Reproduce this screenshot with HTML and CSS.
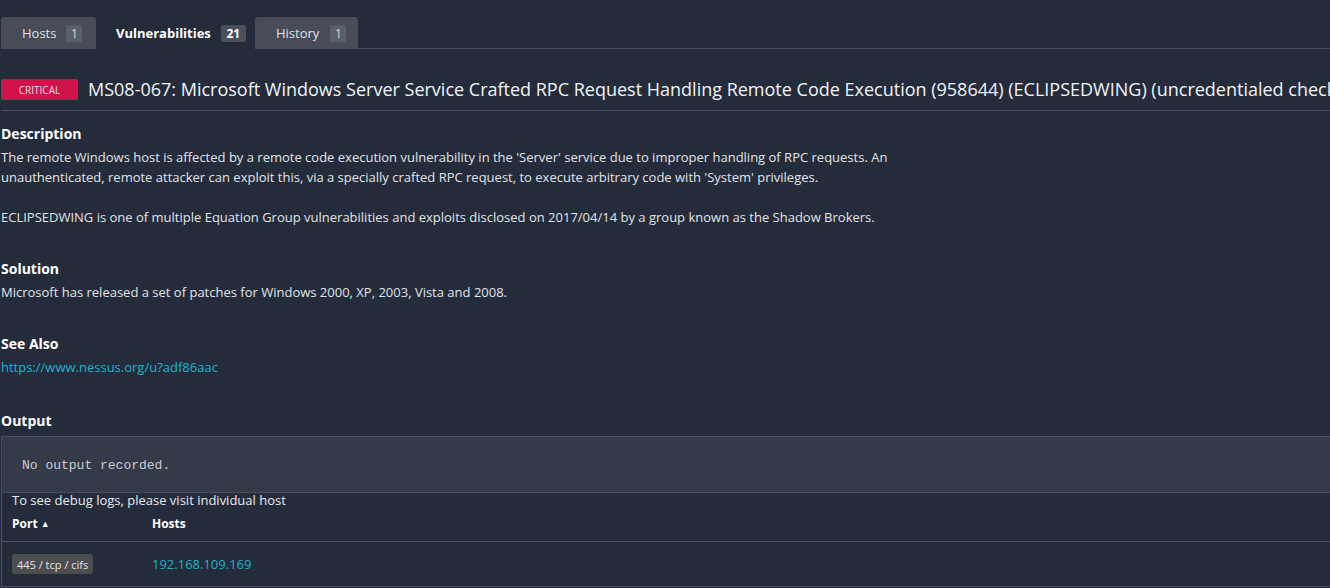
FILE: index.html
```html
<!DOCTYPE html>
<html>
<head>
<meta charset="utf-8">
<link rel="stylesheet" href="styles.css">
</head>
<body>
<div class="page">
  <div class="tabs">
    <div class="tab tab-hosts"><span>Hosts</span><span class="count">1</span></div>
    <div class="tab tab-vulns active"><span>Vulnerabilities</span><span class="count">21</span></div>
    <div class="tab tab-history"><span>History</span><span class="count">1</span></div>
    <div class="tab-rest"></div>
  </div>

  <div class="title-row">
    <span class="sev">CRITICAL</span>
    <h1 class="title">MS08-067: Microsoft Windows Server Service Crafted RPC Request Handling Remote Code Execution (958644) (ECLIPSEDWING) (uncredentialed check)</h1>
  </div>

  <div class="section sec-desc">
    <h2 class="sec-h">Description</h2>
    <p class="sec-p">The remote Windows host is affected by a remote code execution vulnerability in the 'Server' service due to improper handling of RPC requests. An unauthenticated, remote attacker can exploit this, via a specially crafted RPC request, to execute arbitrary code with 'System' privileges.<br><br>ECLIPSEDWING is one of multiple Equation Group vulnerabilities and exploits disclosed on 2017/04/14 by a group known as the Shadow Brokers.</p>
  </div>

  <div class="section sec-sol">
    <h2 class="sec-h">Solution</h2>
    <p class="sec-p">Microsoft has released a set of patches for Windows 2000, XP, 2003, Vista and 2008.</p>
  </div>

  <div class="section sec-see">
    <h2 class="sec-h">See Also</h2>
    <p class="sec-p"><a class="link" href="#">https://www.nessus.org/u?adf86aac</a></p>
  </div>

  <div class="section sec-out">
    <h2 class="sec-h">Output</h2>
    <div class="output-wrap">
      <div class="output-box"><pre class="mono">No output recorded.</pre></div>
      <div class="debug">To see debug logs, please visit individual host</div>
      <div class="trow thead">
        <div class="c-port">Port <span class="arrow">▲</span></div>
        <div class="c-host">Hosts</div>
      </div>
      <div class="trow tbody">
        <div class="c-port"><span class="port-badge">445 / tcp / cifs</span></div>
        <div class="c-host"><a class="link" href="#">192.168.109.169</a></div>
      </div>
    </div>
  </div>
</div>
</body>
</html>
```
FILE: styles.css
```css
* { box-sizing: border-box; }
html, body {
  margin: 0;
  padding: 0;
  background: #242c3b;
  overflow: hidden;
}
body {
  font-family: "Open Sans", "Noto Sans", sans-serif;
  color: #e6e8ec;
  width: 1330px;
  height: 588px;
}
.page {
  padding: 17px 0 0 1px;
  width: 1700px;
}
.tabs {
  display: flex;
  height: 32px;
  align-items: stretch;
}
.tab {
  display: flex;
  align-items: center;
  padding: 0 0 0 21px;
  gap: 10px;
  background: #484c57;
  color: #dfe1e5;
  font-size: 13px;
  border-radius: 3px 3px 0 0;
}
.tab-hosts { width: 95px; }
.tab-vulns { width: 159px; padding-left: 20px; }
.tab-history { width: 103px; padding-left: 21px; gap: 11px; }
.tab.active {
  background: #242c3b;
  font-weight: 700;
  color: #ffffff;
}
.count {
  display: inline-flex;
  align-items: center;
  justify-content: center;
  min-width: 16px;
  height: 17px;
  padding: 0 4px;
  background: #5b5f6a;
  border-radius: 2px;
  font-size: 12px;
  color: #dcdee2;
  font-weight: 400;
}
.tab.active .count {
  background: #4b505b;
  color: #fff;
  font-weight: 700;
  min-width: 25px;
}
.tab-rest {
  flex: 1;
  border-bottom: 1px solid #4a4f5a;
}
.title-row {
  display: flex;
  align-items: center;
  gap: 10px;
  margin-top: 30px;
  height: 21px;
  padding-bottom: 10px;
  box-sizing: content-box;
  border-bottom: 1px solid #4a4f5a;
  white-space: nowrap;
}
.sev {
  display: inline-flex;
  align-items: center;
  justify-content: center;
  width: 77px;
  height: 21px;
  background: #d0134b;
  color: #f6dbe3;
  font-size: 10px;
  border-radius: 2px;
  flex: none;
}
.title {
  margin: 0;
  font-size: 18px;
  line-height: 21px;
  font-weight: 400;
  color: #f2f3f5;
}
.section {
  width: 900px;
}
.sec-h {
  margin: 0;
  font-size: 14px;
  font-weight: 700;
  line-height: 20px;
  color: #ffffff;
}
.sec-p {
  margin: 3px 0 0;
  font-size: 13px;
  line-height: 20px;
  color: #e1e3e7;
}
.sec-desc { margin-top: 13px; }
.sec-sol { margin-top: 32px; }
.sec-see { margin-top: 32px; }
.sec-out { margin-top: 34px; width: auto; }
.link {
  color: #1db3c9;
  text-decoration: none;
}
.output-wrap {
  margin-top: 5px;
  border-left: 1px solid #4a4f5a;
}
.output-box {
  background: #353a48;
  border-top: 1px solid #4a4f5a;
  border-bottom: 1px solid #4a4f5a;
  height: 57px;
  display: flex;
  align-items: center;
  padding-left: 20px;
}
.mono {
  margin: 0;
  font-family: "Liberation Mono", "DejaVu Sans Mono", monospace;
  font-size: 13px;
  color: #c9ccd2;
  padding-top: 1px;
}
.debug {
  font-size: 13px;
  line-height: 15px;
  padding-left: 10px;
  color: #e6e8ec;
}
.trow {
  display: flex;
  align-items: center;
  border-bottom: 1px solid #4a4f5a;
}
.thead {
  height: 34px;
  padding-bottom: 3px;
  font-size: 12px;
  font-weight: 700;
  color: #ffffff;
}
.tbody {
  height: 45px;
  font-size: 13px;
}
.c-port {
  width: 140px;
  padding-left: 10px;
}
.arrow {
  font-size: 9px;
  vertical-align: 1px;
}
.port-badge {
  display: inline-flex;
  align-items: center;
  height: 20px;
  padding: 0 5px;
  background: #4d4d50;
  border-radius: 3px;
  font-size: 11px;
  color: #e3e4e6;
}
.c-host {
  padding-left: 10px;
}
```
